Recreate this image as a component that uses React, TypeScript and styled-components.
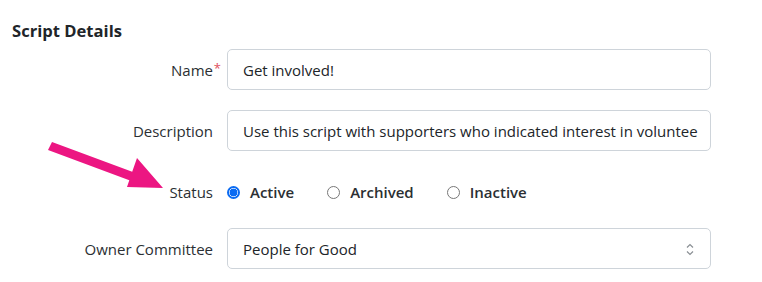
import React from "react";
import styled, { createGlobalStyle } from "styled-components";

const Global = createGlobalStyle`
  html, body { margin: 0; padding: 0; background: #fff; }
  body { font-family: "Open Sans", "Noto Sans", Arial, sans-serif; color: #212529; }
  * { box-sizing: border-box; }
`;

const Page = styled.div`
  position: relative;
  width: 762px;
  height: 282px;
  padding: 19px 12px 0 12px;
`;

const Title = styled.h5`
  margin: 0 0 6px 0;
  font-size: 16.6px;
  font-weight: 700;
  line-height: 24px;
  color: #212529;
`;

const Form = styled.div`
  display: flex;
  flex-direction: column;
`;

const Row = styled.div<{ $height?: number; $after?: number }>`
  display: grid;
  grid-template-columns: 201px 484px;
  column-gap: 14px;
  align-items: center;
  height: ${(p) => p.$height ?? 41}px;
  margin-bottom: ${(p) => p.$after ?? 20}px;
`;

const Label = styled.label`
  position: relative;
  text-align: right;
  font-size: 15px;
  font-weight: 500;
  color: #2b2f33;
`;

const Req = styled.span`
  position: absolute;
  right: -8px;
  top: -1px;
  color: #e0505e;
  font-size: 13px;
`;

const Input = styled.div`
  height: 41px;
  border: 1px solid #ced4da;
  border-radius: 5px;
  padding: 0 15px;
  display: flex;
  align-items: center;
  font-size: 15px;
  color: #212529;
  white-space: nowrap;
  overflow: hidden;
`;

const Select = styled(Input)`
  justify-content: space-between;
  padding-right: 15px;
`;

const Radios = styled.div`
  display: flex;
  align-items: center;
  gap: 33px;
`;

const RadioItem = styled.div`
  display: flex;
  align-items: center;
  gap: 10px;
  font-size: 15px;
  font-weight: 600;
  color: #2b2f33;
`;

const RadioDot = styled.span<{ $checked?: boolean }>`
  width: 13px;
  height: 13px;
  border-radius: 50%;
  display: inline-block;
  border: ${(p) => (p.$checked ? "2px solid #0b6bf2" : "1px solid #777")};
  background: ${(p) => (p.$checked ? "radial-gradient(circle, #0b6bf2 0 3.6px, #fff 4.2px)" : "#fff")};
  flex-shrink: 0;
`;

const Arrow = styled.svg`
  position: absolute;
  left: 0;
  top: 0;
  pointer-events: none;
`;

const Chevrons = () => (
  <svg width="10" height="16" viewBox="0 0 10 16" fill="none" stroke="#8a8f94" strokeWidth="1.2">
    <path d="M2 6.5 L5 3.5 L8 6.5" />
    <path d="M2 10.5 L5 13.5 L8 10.5" />
  </svg>
);

export default function App() {
  return (
    <>
      <Global />
      <Page>
        <Title>Script Details</Title>
        <Form>
          <Row>
            <Label>
              Name<Req>*</Req>
            </Label>
            <Input>Get involved!</Input>
          </Row>
          <Row>
            <Label>Description</Label>
            <Input>Use this script with supporters who indicated interest in voluntee</Input>
          </Row>
          <Row $height={42} $after={15}>
            <Label>Status</Label>
            <Radios>
              <RadioItem>
                <RadioDot $checked />
                Active
              </RadioItem>
              <RadioItem>
                <RadioDot />
                Archived
              </RadioItem>
              <RadioItem>
                <RadioDot />
                Inactive
              </RadioItem>
            </Radios>
          </Row>
          <Row>
            <Label>Owner Committee</Label>
            <Select>
              <span>People for Good</span>
              <Chevrons />
            </Select>
          </Row>
        </Form>
        <Arrow width="762" height="282" viewBox="0 0 762 282">
          <polygon
            points="52,142 132.2,171.8 137,158 163,188 127,187 129.3,180.2 48,150"
            fill="#ec1682"
          />
        </Arrow>
      </Page>
    </>
  );
}
